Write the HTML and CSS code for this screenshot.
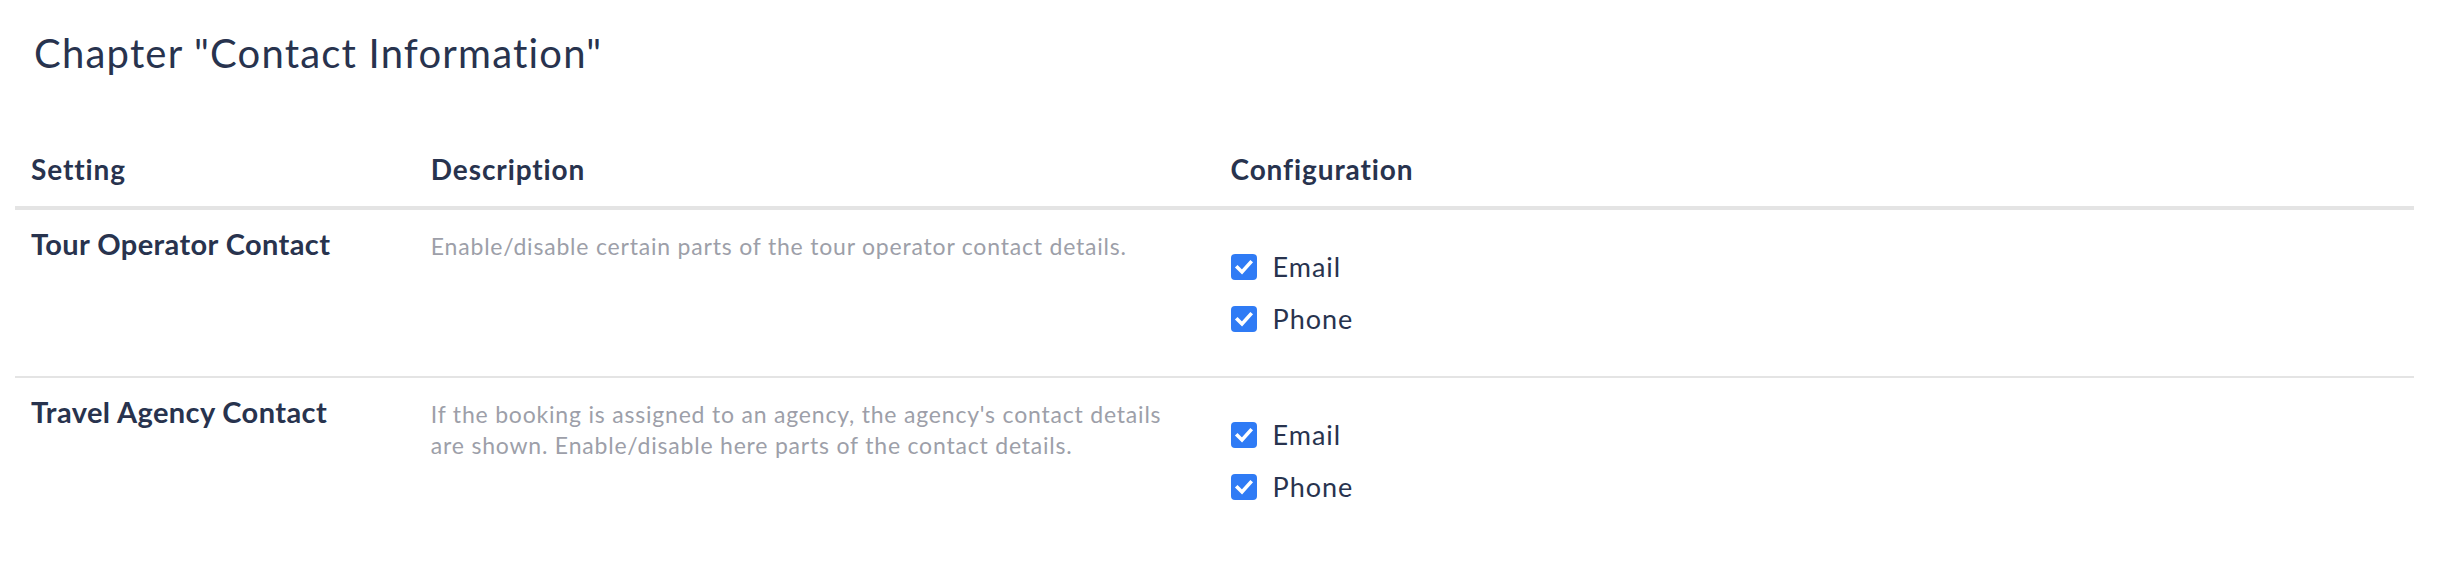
FILE: index.html
```html
<!DOCTYPE html>
<html lang="en">
<head>
<meta charset="utf-8">
<title>Chapter "Contact Information"</title>
<link rel="stylesheet" href="styles.css">
</head>
<body>
<div class="page">
  <h1 class="title">Chapter "Contact Information"</h1>
  <div class="table">
    <div class="row head">
      <div class="cell">Setting</div>
      <div class="cell">Description</div>
      <div class="cell">Configuration</div>
    </div>
    <div class="row">
      <div class="cell label">Tour Operator Contact</div>
      <div class="cell desc">Enable/disable certain parts of the tour operator contact details.</div>
      <div class="cell config">
        <label class="check">
          <svg class="box" viewBox="0 0 26 26" width="26" height="26"><rect width="26" height="26" rx="4" fill="#2f7bf5"/><path d="M6.5 13.5 L11 18 L19.5 8.5" fill="none" stroke="#fff" stroke-width="3.6" stroke-linecap="square"/></svg>
          <span>Email</span>
        </label>
        <label class="check">
          <svg class="box" viewBox="0 0 26 26" width="26" height="26"><rect width="26" height="26" rx="4" fill="#2f7bf5"/><path d="M6.5 13.5 L11 18 L19.5 8.5" fill="none" stroke="#fff" stroke-width="3.6" stroke-linecap="square"/></svg>
          <span>Phone</span>
        </label>
      </div>
    </div>
    <div class="row last">
      <div class="cell label">Travel Agency Contact</div>
      <div class="cell desc">If the booking is assigned to an agency, the agency's contact details are shown. Enable/disable here parts of the contact details.</div>
      <div class="cell config">
        <label class="check">
          <svg class="box" viewBox="0 0 26 26" width="26" height="26"><rect width="26" height="26" rx="4" fill="#2f7bf5"/><path d="M6.5 13.5 L11 18 L19.5 8.5" fill="none" stroke="#fff" stroke-width="3.6" stroke-linecap="square"/></svg>
          <span>Email</span>
        </label>
        <label class="check">
          <svg class="box" viewBox="0 0 26 26" width="26" height="26"><rect width="26" height="26" rx="4" fill="#2f7bf5"/><path d="M6.5 13.5 L11 18 L19.5 8.5" fill="none" stroke="#fff" stroke-width="3.6" stroke-linecap="square"/></svg>
          <span>Phone</span>
        </label>
      </div>
    </div>
  </div>
</div>
</body>
</html>
```

FILE: styles.css
```css
html, body {
  margin: 0;
  padding: 0;
  background: #ffffff;
}

body {
  font-family: Lato, "Open Sans", sans-serif;
  color: #28334e;
}

.page {
  padding: 29px 32px 0 15px;
}

.title {
  margin: 0;
  padding-left: 19px;
  font-size: 40px;
  line-height: 48px;
  font-weight: 400;
  letter-spacing: 1.2px;
  color: #28334e;
}

.table {
  margin-top: 60px;
  width: 2399px;
}

.row {
  display: grid;
  grid-template-columns: 1fr 2fr 3fr;
  border-bottom: 2px solid #e4e4e4;
}

.row.last {
  border-bottom: none;
}

.cell {
  padding: 0 16px;
}

.head {
  border-bottom: 4px solid #e4e4e4;
}

.head .cell {
  padding-top: 16px;
  padding-bottom: 21px;
  font-size: 28px;
  line-height: 32px;
  font-weight: 700;
  letter-spacing: 0.9px;
}

.label {
  padding-top: 14px;
  font-size: 29px;
  line-height: 40px;
  font-weight: 700;
  letter-spacing: 0.4px;
}

.desc {
  padding-top: 21px;
  padding-right: 40px;
  font-size: 23px;
  line-height: 31px;
  letter-spacing: 0.8px;
  color: #9d9fa9;
}

.config {
  padding-top: 44px;
  padding-bottom: 44px;
  display: flex;
  flex-direction: column;
  gap: 26px;
}

.check {
  display: flex;
  align-items: center;
  gap: 16px;
  height: 26px;
  font-size: 27px;
  line-height: 26px;
  letter-spacing: 1px;
}

.box {
  display: block;
  flex: none;
}
```
